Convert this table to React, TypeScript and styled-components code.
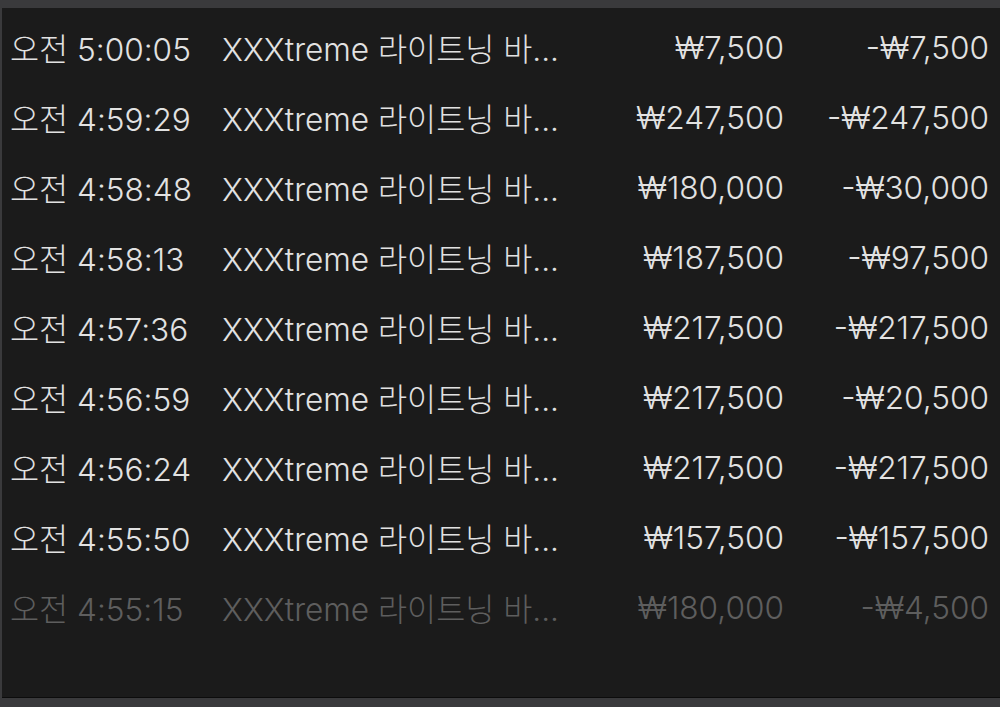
import * as React from 'react';
import styled, { createGlobalStyle } from 'styled-components';

const GlobalStyle = createGlobalStyle`
    html, body {
        margin: 0;
        padding: 0;
        background: #3a3a3c;
    }
`;

const Frame = styled.div`
    width: 1000px;
    height: 707px;
    box-sizing: border-box;
    border-top: 8px solid #3a3a3c;
    border-left: 2px solid #3a3a3c;
    border-bottom: 9px solid #3a3a3c;
    background-color: #1b1b1b;
    box-shadow: inset 0 -1px 0 #0c0c0c;
    overflow: hidden;
`;

const List = styled.div`
    display: flex;
    flex-direction: column;
    padding: 4px 11px 0 8px;
`;

const Row = styled.div<{ $faded?: boolean }>`
    display: grid;
    grid-template-columns: 212px 340px 1fr 205px;
    align-items: center;
    height: 70px;
    font-family: Inter, 'Noto Sans CJK KR', sans-serif;
    font-size: 31.6px;
    font-weight: 300;
    color: ${(p) => (p.$faded ? '#5e5e5e' : '#e2e2e2')};
    white-space: nowrap;
`;

const Cell = styled.span<{ $right?: boolean }>`
    text-align: ${(p) => (p.$right ? 'right' : 'left')};
    overflow: hidden;
`;

const rows = [
    ['오전 5:00:05', '₩7,500', '-₩7,500'],
    ['오전 4:59:29', '₩247,500', '-₩247,500'],
    ['오전 4:58:48', '₩180,000', '-₩30,000'],
    ['오전 4:58:13', '₩187,500', '-₩97,500'],
    ['오전 4:57:36', '₩217,500', '-₩217,500'],
    ['오전 4:56:59', '₩217,500', '-₩20,500'],
    ['오전 4:56:24', '₩217,500', '-₩217,500'],
    ['오전 4:55:50', '₩157,500', '-₩157,500'],
    ['오전 4:55:15', '₩180,000', '-₩4,500'],
];

export default function App() {
    return (
        <>
            <GlobalStyle />
            <Frame>
                <List>
                    {rows.map((r, i) => (
                        <Row key={i} $faded={i === rows.length - 1}>
                            <Cell>{r[0]}</Cell>
                            <Cell>XXXtreme 라이트닝 바...</Cell>
                            <Cell $right>{r[1]}</Cell>
                            <Cell $right>{r[2]}</Cell>
                        </Row>
                    ))}
                </List>
            </Frame>
        </>
    );
}
